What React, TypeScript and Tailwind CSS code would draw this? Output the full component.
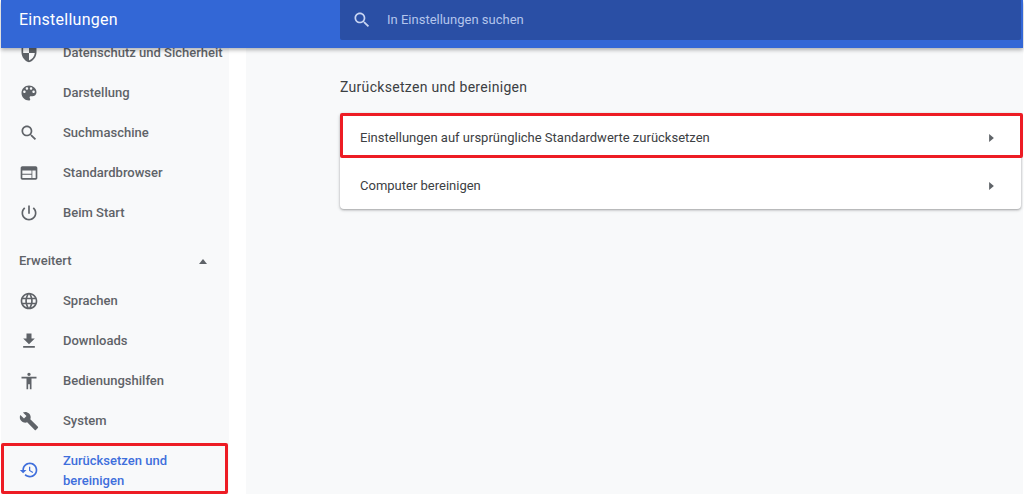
const ICONS: Record<string, string> = {
  shield: "M12 1L3 5v6c0 5.55 3.84 10.74 9 12 5.16-1.26 9-6.45 9-12V5l-9-4zm0 10.99h7c-.53 4.12-3.28 7.79-7 8.94V12H5V6.3l7-3.11v8.8z",
  palette: "M12 3c-4.97 0-9 4.03-9 9s4.03 9 9 9c.83 0 1.5-.67 1.5-1.5 0-.39-.15-.74-.39-1.01-.23-.26-.38-.61-.38-.99 0-.83.67-1.5 1.5-1.5H16c2.76 0 5-2.24 5-5 0-4.42-4.03-8-9-8zm-5.5 9c-.83 0-1.5-.67-1.5-1.5S5.67 9 6.5 9 8 9.67 8 10.5 7.33 12 6.5 12zm3-4C8.67 8 8 7.33 8 6.5S8.67 5 9.5 5s1.5.67 1.5 1.5S10.33 8 9.5 8zm5 0c-.83 0-1.5-.67-1.5-1.5S13.67 5 14.5 5s1.5.67 1.5 1.5S15.33 8 14.5 8zm3 4c-.83 0-1.5-.67-1.5-1.5S16.67 9 17.5 9s1.5.67 1.5 1.5-.67 1.5-1.5 1.5z",
  search: "M15.5 14h-.79l-.28-.27C15.41 12.59 16 11.11 16 9.5 16 5.91 13.09 3 9.5 3S3 5.91 3 9.5 5.91 16 9.5 16c1.61 0 3.09-.59 4.23-1.57l.27.28v.79l5 4.99L20.49 19l-4.99-5zm-6 0C7.01 14 5 11.99 5 9.5S7.01 5 9.5 5 14 7.01 14 9.5 11.99 14 9.5 14z",
  browser: "M20 4H4c-1.1 0-2 .9-2 2v12c0 1.1.9 2 2 2h16c1.1 0 2-.9 2-2V6c0-1.1-.9-2-2-2zm-5 14H4v-4h11v4zm0-5H4V9h11v4zm5 5h-4V9h4v9z",
  power: "M13 3h-2v10h2V3zm4.83 2.17l-1.42 1.42C17.99 7.86 19 9.81 19 12c0 3.87-3.13 7-7 7s-7-3.13-7-7c0-2.19 1.01-4.14 2.58-5.42L6.17 5.17C4.23 6.82 3 9.26 3 12c0 4.97 4.03 9 9 9s9-4.03 9-9c0-2.74-1.23-5.18-3.17-6.83z",
  language: "M11.99 2C6.47 2 2 6.48 2 12s4.47 10 9.99 10C17.52 22 22 17.52 22 12S17.52 2 11.99 2zm6.93 6h-2.95c-.32-1.25-.78-2.45-1.38-3.56 1.84.63 3.37 1.91 4.33 3.56zM12 4.04c.83 1.2 1.48 2.53 1.91 3.96h-3.82c.43-1.43 1.08-2.76 1.91-3.96zM4.26 14C4.1 13.36 4 12.69 4 12s.1-1.36.26-2h3.38c-.08.66-.14 1.32-.14 2 0 .68.06 1.34.14 2H4.26zm.82 2h2.95c.32 1.25.78 2.45 1.38 3.56-1.84-.63-3.37-1.9-4.33-3.56zm2.95-8H5.08c.96-1.66 2.49-2.93 4.33-3.56C8.81 5.55 8.35 6.75 8.03 8zM12 19.96c-.83-1.2-1.48-2.53-1.91-3.96h3.82c-.43 1.43-1.08 2.76-1.91 3.96zM14.34 14H9.66c-.09-.66-.16-1.32-.16-2 0-.68.07-1.35.16-2h4.68c.09.65.16 1.32.16 2 0 .68-.07 1.34-.16 2zm.25 5.56c.6-1.11 1.06-2.31 1.38-3.56h2.95c-.96 1.65-2.49 2.93-4.33 3.56zM16.36 14c.08-.66.14-1.32.14-2 0-.68-.06-1.34-.14-2h3.38c.16.64.26 1.31.26 2s-.1 1.36-.26 2h-3.38z",
  download: "M19 9h-4V3H9v6H5l7 7 7-7zM5 18v2h14v-2H5z",
  accessibility: "M12 2c1.1 0 2 .9 2 2s-.9 2-2 2-2-.9-2-2 .9-2 2-2zm9 7h-6v13h-2v-6h-2v6H9V9H3V7h18v2z",
  build: "M22.7 19l-9.1-9.1c.9-2.3.4-5-1.5-6.9-2-2-5-2.4-7.4-1.3L9 6 6 9 1.6 4.7C.4 7.1.9 10.1 2.9 12.1c1.9 1.9 4.6 2.4 6.9 1.5l9.1 9.1c.4.4 1 .4 1.4 0l2.3-2.3c.5-.4.5-1.1.1-1.4z",
  restore: "M13 3c-4.97 0-9 4.03-9 9H1l3.89 3.89.07.14L9 12H6c0-3.87 3.13-7 7-7s7 3.13 7 7-3.13 7-7 7c-1.93 0-3.68-.79-4.94-2.06l-1.42 1.42C8.27 19.99 10.51 21 13 21c4.97 0 9-4.03 9-9s-4.03-9-9-9zm-1 5v5l4.28 2.54.72-1.21-3.5-2.08V8H12z",
};

function Icon({ name, className }: { name: string; className: string }) {
  return (
    <svg viewBox="0 0 24 24" fill="currentColor" className={className}>
      <path fillRule="evenodd" d={ICONS[name]} />
    </svg>
  );
}

function NavRow({ icon, label }: { icon: string; label: string }) {
  return (
    <div className="h-10 flex items-center pl-[18px] text-[13px] font-medium text-[#5f6368]">
      <Icon name={icon} className="w-5 h-5 shrink-0" />
      <span className="ml-6 whitespace-nowrap">{label}</span>
    </div>
  );
}

function CardRow({ label, boxed }: { label: string; boxed?: boolean }) {
  return (
    <div className="relative h-12 flex items-center justify-between pt-[2px] pl-5 pr-[26px] text-[13px] text-[#3c4043]">
      <span>{label}</span>
      <svg viewBox="0 0 6 10" fill="currentColor" className="w-[5px] h-2 text-[#5f6368] mr-[1px]">
        <path d="M0 0l6 5-6 5z" />
      </svg>
      {boxed && (
        <div className="absolute left-0 -right-[2px] top-0 h-[45px] border-[3px] border-[#ed1c24] rounded-[2px]" />
      )}
    </div>
  );
}

export default function App() {
  return (
    <div
      className="h-[495px] w-[1024px] overflow-hidden bg-white flex flex-col pl-[1px] pr-[1px]"
      style={{ fontFamily: "Roboto, sans-serif" }}
    >
      {/* top bar */}
      <header className="relative z-10 h-12 shrink-0 flex bg-[#3367d6] shadow-[0_2px_4px_rgba(0,0,0,0.3)]">
        <div className="w-[339px] pl-[18px] pt-[10px] text-[16px] leading-5 text-white tracking-[0.25px]">
          Einstellungen
        </div>
        <div className="h-10 flex-1 mr-[2px] flex items-center bg-[#2a4fa5] rounded-b-[2px] pl-3 text-[13px] text-[#b4c5ec]">
          <Icon name="search" className="w-5 h-5 text-[#c8d5f3]" />
          <span className="ml-[15px]">In Einstellungen suchen</span>
        </div>
      </header>

      <div className="flex-1 min-h-0 flex pb-[1px]">
        {/* sidebar, scrolled down a bit */}
        <nav className="w-[228px] shrink-0 bg-[#f8f9fa] overflow-hidden">
          <div className="-mt-[15px]">
            <NavRow icon="shield" label="Datenschutz und Sicherheit" />
            <NavRow icon="palette" label="Darstellung" />
            <NavRow icon="search" label="Suchmaschine" />
            <NavRow icon="browser" label="Standardbrowser" />
            <NavRow icon="power" label="Beim Start" />
            <div className="mt-2 h-10 flex items-center justify-between pl-[18px] pr-[22px] text-[13px] font-medium text-[#5f6368]">
              <span>Erweitert</span>
              <svg viewBox="0 0 10 6" fill="currentColor" className="w-2 h-[5px]">
                <path d="M0 6l5-6 5 6z" />
              </svg>
            </div>
            <NavRow icon="language" label="Sprachen" />
            <NavRow icon="download" label="Downloads" />
            <NavRow icon="accessibility" label="Bedienungshilfen" />
            <NavRow icon="build" label="System" />
            <div className="relative h-[58px] flex items-center pl-[18px] text-[13px] font-medium leading-5 text-[#3f6fdc]">
              <Icon name="restore" className="w-5 h-5 shrink-0" />
              <span className="ml-6 mt-[2px]">
                Zurücksetzen und
                <br />
                bereinigen
              </span>
              <div className="absolute left-0 right-[1px] top-[2px] h-[51px] border-[3px] border-[#ed1c24] rounded-[2px]" />
            </div>
          </div>
        </nav>

        {/* main column */}
        <main className="flex-1 ml-[17px] bg-[#f8f9fa] pl-[94px] pr-[2px]">
          <h2 className="mt-[31px] text-[14px] leading-4 text-[#3c4043] tracking-[0.3px]">
            Zurücksetzen und bereinigen
          </h2>
          <div className="mt-[18px] bg-white rounded-[4px] shadow-[0_1px_2px_rgba(60,64,67,0.35),0_1px_3px_1px_rgba(60,64,67,0.12)]">
            <CardRow label="Einstellungen auf ursprüngliche Standardwerte zurücksetzen" boxed />
            <CardRow label="Computer bereinigen" />
          </div>
        </main>
      </div>
    </div>
  );
}
